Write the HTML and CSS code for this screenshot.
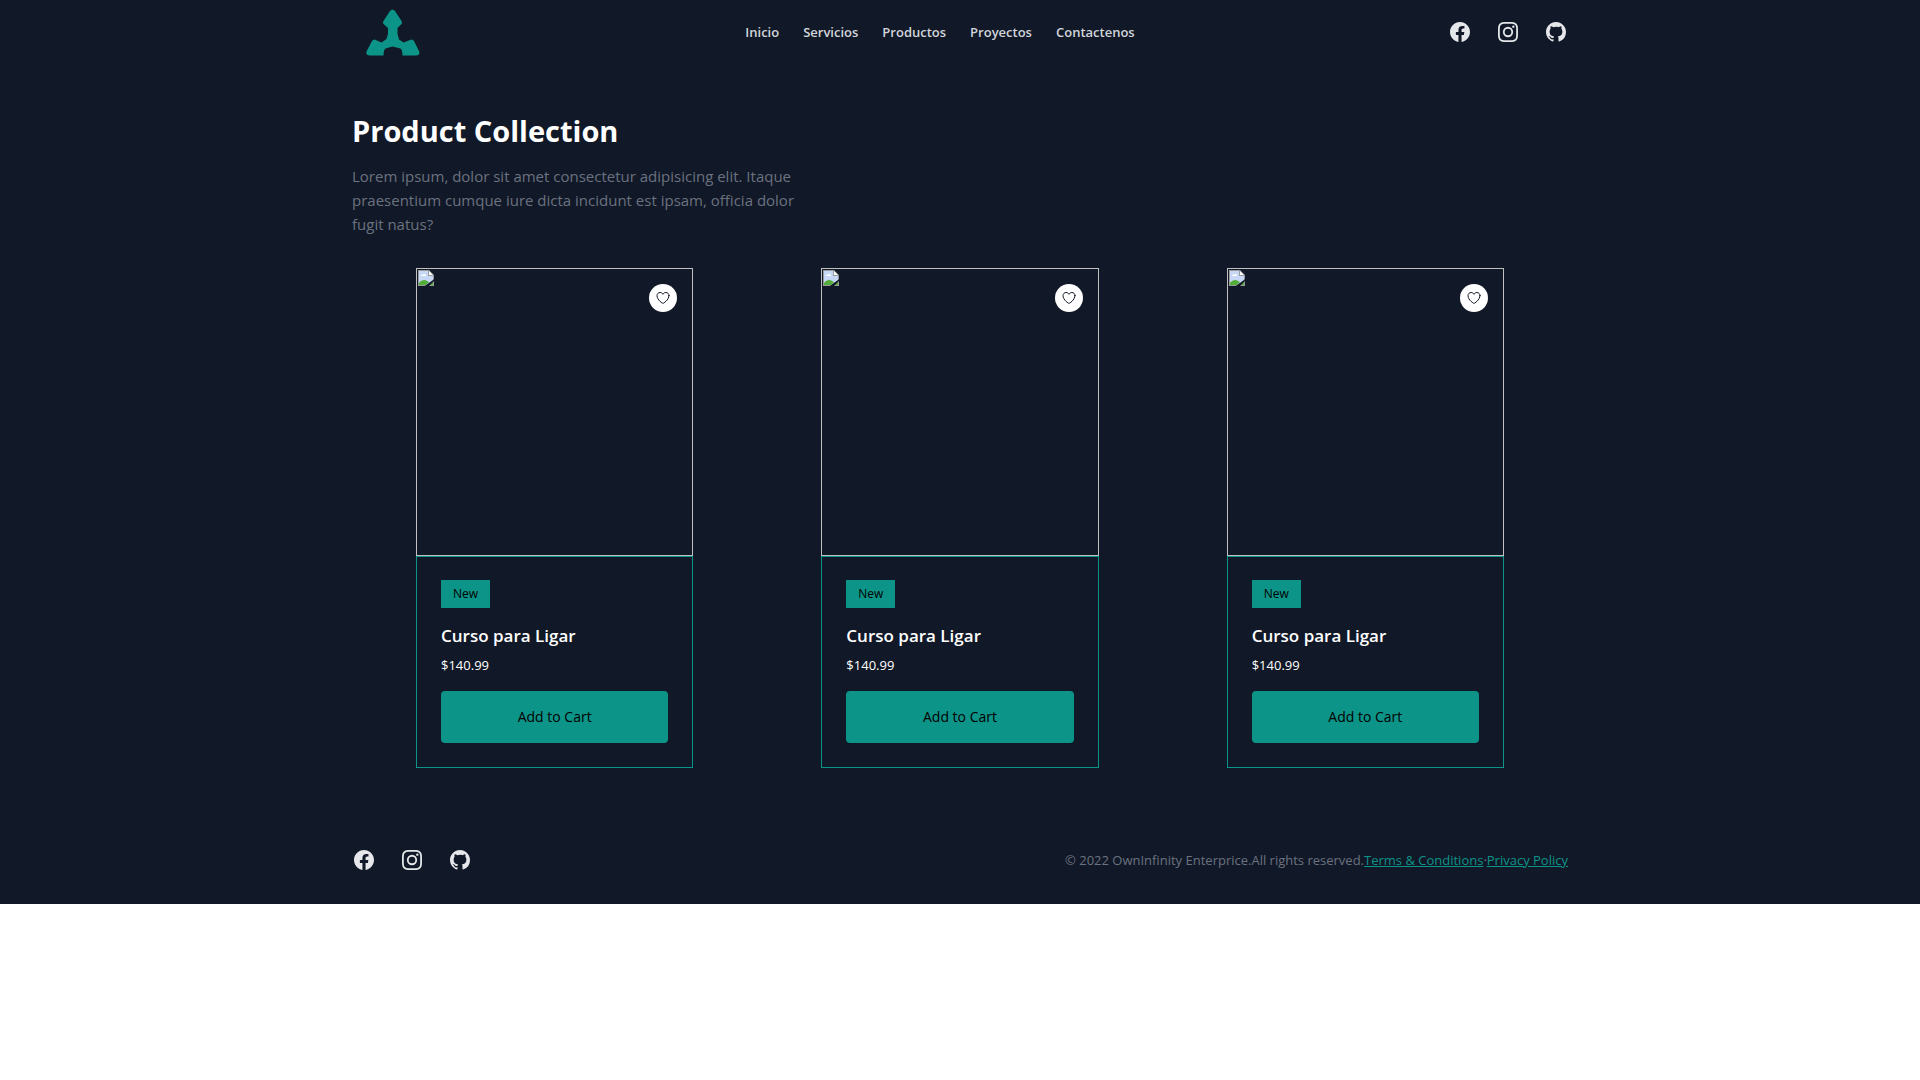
FILE: index.html
```html
<!DOCTYPE html>
<html lang="es">
<head>
<meta charset="utf-8">
<meta name="viewport" content="width=device-width, initial-scale=1">
<title>Product Collection</title>
<link rel="stylesheet" href="styles.css">
</head>
<body>
<svg class="sprite" aria-hidden="true">
  <symbol id="facebook" viewBox="0 0 24 24"><path d="M22 12c0-5.523-4.477-10-10-10S2 6.477 2 12c0 4.991 3.657 9.128 8.438 9.878v-6.987h-2.54V12h2.54V9.797c0-2.506 1.492-3.89 3.777-3.89 1.094 0 2.238.195 2.238.195v2.46h-1.26c-1.243 0-1.63.771-1.63 1.562V12h2.773l-.443 2.89h-2.33v6.988C18.343 21.128 22 16.991 22 12z"/></symbol>
  <symbol id="instagram" viewBox="0 0 24 24"><path fill-rule="evenodd" d="M12.315 2c2.43 0 2.784.013 3.808.06 1.064.049 1.791.218 2.427.465a4.902 4.902 0 011.772 1.153 4.902 4.902 0 011.153 1.772c.247.636.416 1.363.465 2.427.048 1.067.06 1.407.06 4.123v.08c0 2.643-.012 2.987-.06 4.043-.049 1.064-.218 1.791-.465 2.427a4.902 4.902 0 01-1.153 1.772 4.902 4.902 0 01-1.772 1.153c-.636.247-1.363.416-2.427.465-1.067.048-1.407.06-4.123.06h-.08c-2.643 0-2.987-.012-4.043-.06-1.064-.049-1.791-.218-2.427-.465a4.902 4.902 0 01-1.772-1.153 4.902 4.902 0 01-1.153-1.772c-.247-.636-.416-1.363-.465-2.427-.047-1.024-.06-1.379-.06-3.808v-.63c0-2.43.013-2.784.06-3.808.049-1.064.218-1.791.465-2.427a4.902 4.902 0 011.153-1.772A4.902 4.902 0 015.45 2.525c.636-.247 1.363-.416 2.427-.465C8.901 2.013 9.256 2 11.685 2h.63zm-.081 1.802h-.468c-2.456 0-2.784.011-3.807.058-.975.045-1.504.207-1.857.344-.467.182-.8.398-1.15.748-.35.35-.566.683-.748 1.15-.137.353-.3.882-.344 1.857-.047 1.023-.058 1.351-.058 3.807v.468c0 2.456.011 2.784.058 3.807.045.975.207 1.504.344 1.857.182.466.399.8.748 1.15.35.35.683.566 1.15.748.353.137.882.3 1.857.344 1.054.048 1.37.058 4.041.058h.08c2.597 0 2.917-.01 3.96-.058.976-.045 1.505-.207 1.858-.344.466-.182.8-.398 1.15-.748.35-.35.566-.683.748-1.15.137-.353.3-.882.344-1.857.048-1.055.058-1.37.058-4.041v-.08c0-2.597-.01-2.917-.058-3.96-.045-.976-.207-1.505-.344-1.858a3.097 3.097 0 00-.748-1.15 3.098 3.098 0 00-1.15-.748c-.353-.137-.882-.3-1.857-.344-1.023-.047-1.351-.058-3.807-.058zM12 6.865a5.135 5.135 0 110 10.27 5.135 5.135 0 010-10.27zm0 1.802a3.333 3.333 0 100 6.666 3.333 3.333 0 000-6.666zm5.338-3.205a1.2 1.2 0 110 2.4 1.2 1.2 0 010-2.4z"/></symbol>
  <symbol id="github" viewBox="0 0 24 24"><path fill-rule="evenodd" d="M12 2C6.477 2 2 6.484 2 12.017c0 4.425 2.865 8.18 6.839 9.504.5.092.682-.217.682-.483 0-.237-.008-.868-.013-1.703-2.782.605-3.369-1.343-3.369-1.343-.454-1.158-1.11-1.466-1.11-1.466-.908-.62.069-.608.069-.608 1.003.07 1.531 1.032 1.531 1.032.892 1.53 2.341 1.088 2.91.832.092-.647.35-1.088.636-1.338-2.22-.253-4.555-1.113-4.555-4.951 0-1.093.39-1.988 1.029-2.688-.103-.253-.446-1.272.098-2.65 0 0 .84-.27 2.75 1.026A9.564 9.564 0 0112 6.844c.85.004 1.705.115 2.504.337 1.909-1.296 2.747-1.027 2.747-1.027.546 1.379.202 2.398.1 2.651.64.7 1.028 1.595 1.028 2.688 0 3.848-2.339 4.695-4.566 4.943.359.309.678.92.678 1.855 0 1.338-.012 2.419-.012 2.747 0 .268.18.58.688.482A10.019 10.019 0 0022 12.017C22 6.484 17.522 2 12 2z"/></symbol>
  <symbol id="heart" viewBox="0 0 24 24"><path fill="none" stroke="currentColor" stroke-width="1.5" stroke-linecap="round" stroke-linejoin="round" d="M21 8.25c0-2.485-2.099-4.5-4.688-4.5-1.935 0-3.597 1.126-4.312 2.733-.715-1.607-2.377-2.733-4.313-2.733C5.1 3.75 3 5.765 3 8.25c0 7.22 9 12 9 12s9-4.78 9-12z"/></symbol>
  <symbol id="missing" viewBox="0 0 16 16">
    <path fill="#c6d8f5" d="M1 1h10l4 4v5L8 15H1z"/>
    <path fill="#fff" d="M3 6c0-1 1-2 2-1 1-2 3-1 3 1z"/>
    <path fill="#53ad3b" d="M1 15v-2c2-3 6-4 8-2l2 1-3 3zM12 15l3-3v3z"/>
    <path fill="#9a9a9a" d="M0 0h11l5 5v4l-1 1V6h-5V1H1v14h7l-1 1H0zM11 16l1-1h3v-3l1-1v5z"/>
    <path fill="#fff" d="M11 1l4 4h-4z"/>
  </symbol>
</svg>
<div class="page">
  <header class="header container">
    <a class="logo" href="#" aria-label="OwnInfinity">
      <svg width="54" height="48" viewBox="0 0 54 48"><path d="M24 3Q26.500 0 29 3L35.500 13Q36.500 14.500 35.500 16L31.500 20V26L33 31.500L37.500 34.500L45.500 31.500Q47 31.500 48 33L53 43Q54.500 47.500 50 47.500H36.500Q36.500 42 34.500 40.500L26.500 38.500L19.500 40.500Q17.500 42 17.500 47.500H4Q-.500 47.500 .500 43.500L6 33Q7 31.500 8.500 31.500L15.500 34.500L20.500 31L22 26V20L17.500 16Q16.500 14.500 17.500 13Z"/></svg>
    </a>
    <nav class="nav">
      <a href="#">Inicio</a>
      <a href="#">Servicios</a>
      <a href="#">Productos</a>
      <a href="#">Proyectos</a>
      <a href="#">Contactenos</a>
    </nav>
    <div class="social">
      <a href="#" aria-label="Facebook"><svg><use href="#facebook"/></svg></a>
      <a href="#" aria-label="Instagram"><svg><use href="#instagram"/></svg></a>
      <a href="#" aria-label="GitHub"><svg><use href="#github"/></svg></a>
    </div>
  </header>

  <main class="container collection">
    <h1>Product Collection</h1>
    <p class="intro">Lorem ipsum, dolor sit amet consectetur adipisicing elit. Itaque praesentium cumque iure dicta incidunt est ipsam, officia dolor fugit natus?</p>
    <ul class="products">
      <li class="product">
        <div class="photo">
          <svg class="missing"><use href="#missing"/></svg>
          <button class="wish" type="button" aria-label="Wishlist"><svg><use href="#heart"/></svg></button>
        </div>
        <div class="details">
          <span class="badge">New</span>
          <h2>Curso para Ligar</h2>
          <p class="price">$140.99</p>
          <button class="cart" type="button">Add to Cart</button>
        </div>
      </li>
      <li class="product">
        <div class="photo">
          <svg class="missing"><use href="#missing"/></svg>
          <button class="wish" type="button" aria-label="Wishlist"><svg><use href="#heart"/></svg></button>
        </div>
        <div class="details">
          <span class="badge">New</span>
          <h2>Curso para Ligar</h2>
          <p class="price">$140.99</p>
          <button class="cart" type="button">Add to Cart</button>
        </div>
      </li>
      <li class="product">
        <div class="photo">
          <svg class="missing"><use href="#missing"/></svg>
          <button class="wish" type="button" aria-label="Wishlist"><svg><use href="#heart"/></svg></button>
        </div>
        <div class="details">
          <span class="badge">New</span>
          <h2>Curso para Ligar</h2>
          <p class="price">$140.99</p>
          <button class="cart" type="button">Add to Cart</button>
        </div>
      </li>
    </ul>
  </main>

  <footer class="footer container">
    <div class="social">
      <a href="#" aria-label="Facebook"><svg><use href="#facebook"/></svg></a>
      <a href="#" aria-label="Instagram"><svg><use href="#instagram"/></svg></a>
      <a href="#" aria-label="GitHub"><svg><use href="#github"/></svg></a>
    </div>
    <p class="legal">© 2022 OwnInfinity Enterprice.All rights reserved.<a href="#">Terms &amp; Conditions</a>·<a href="#">Privacy Policy</a></p>
  </footer>
</div>
</body>
</html>
```
FILE: styles.css
```css
*, *::before, *::after { box-sizing: border-box; }

body {
  margin: 0;
  background: #fff;
  color: #fff;
  font-family: "Segoe UI", "Open Sans", "Noto Sans", sans-serif;
  font-size: 15px;
  line-height: 24px;
}

h1, h2, p, ul { margin: 0; padding: 0; }
button { border: 0; font: inherit; cursor: pointer; }
svg { display: block; }
.sprite { display: none; }

.page { background: #111827; }

.container {
  max-width: 1280px;
  margin: 0 auto;
  padding: 0 32px;
}

.header {
  display: grid;
  grid-template-columns: 1fr auto 1fr;
  align-items: center;
  height: 64px;
}

.logo { justify-self: start; margin-left: 14px; fill: #0d9488; }

.nav { display: flex; gap: 24px; margin-right: 40px; }
.nav a {
  color: #d1d5db;
  font-size: 13px;
  font-weight: 600;
  line-height: 20px;
  text-decoration: none;
}

.social { display: flex; gap: 24px; }
.header .social { justify-self: end; }
.social a { color: #e5e7eb; }
.social svg { width: 24px; height: 24px; fill: currentColor; }

.collection { padding-top: 48px; padding-bottom: 48px; }
.collection h1 { font-size: 29px; font-weight: 700; line-height: 38px; }
.intro { max-width: 448px; margin-top: 14px; color: #6b7280; }

.products {
  display: grid;
  grid-template-columns: repeat(3, 1fr);
  margin-top: 32px;
  list-style: none;
}
.product { padding: 0 64px; }

.photo {
  position: relative;
  height: 288px;
  padding: 1px;
  border: 1px solid #c0c0c0;
}
.missing { width: 16px; height: 16px; }
.wish {
  position: absolute;
  top: 15px;
  right: 15px;
  display: flex;
  padding: 6px;
  border-radius: 50%;
  background: #fff;
  color: #111827;
}
.wish svg { width: 16px; height: 16px; }

.details {
  display: flex;
  flex-direction: column;
  align-items: flex-start;
  padding: 23px 24px 24px;
  border: 1px solid #0d9488;
}
.badge {
  padding: 6px 12px;
  background: #0d9488;
  color: #000;
  font-size: 12px;
  font-weight: 500;
  line-height: 16px;
}
.details h2 { margin-top: 14px; font-size: 17px; font-weight: 600; line-height: 28px; }
.price { margin-top: 5px; font-size: 13px; line-height: 20px; }
.cart {
  width: 100%;
  margin-top: 16px;
  padding: 16px;
  border-radius: 4px;
  background: #0d9488;
  color: #000;
  font-size: 14px;
  font-weight: 500;
  line-height: 20px;
}

.footer {
  display: flex;
  align-items: center;
  justify-content: space-between;
  padding-top: 32px;
  padding-bottom: 32px;
}
.legal { color: #6b7280; font-size: 13px; line-height: 20px; }
.legal a { color: #0d9488; }
```
